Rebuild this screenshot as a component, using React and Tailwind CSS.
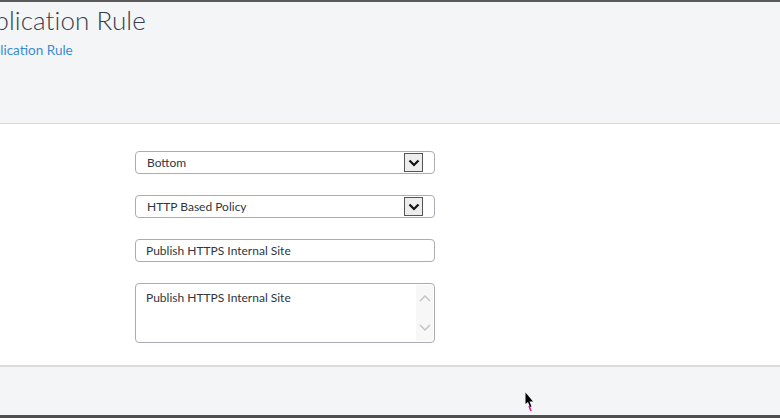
import React from "react";

function Chevron({ className }) {
  return (
    <svg width="12" height="8" viewBox="0 0 12 8" className={className}>
      <path d="M1.5 1.5 L6 6 L10.5 1.5" fill="none" stroke="#111" strokeWidth="2.2" />
    </svg>
  );
}

function Select({ value }) {
  return (
    <div className="relative h-[23px] w-[300px] rounded-[4px] border border-[#a9adb3] bg-white flex items-center pl-[11px] text-[12px] text-[#2f3640]">
      <span>{value}</span>
      <div className="absolute right-[11px] top-[1px] h-[19px] w-[19px] border border-[#555] bg-[#ededed] flex items-center justify-center">
        <Chevron />
      </div>
    </div>
  );
}

export default function App() {
  return (
    <div
      className="w-[780px] h-[418px] overflow-hidden flex flex-col bg-[#f4f5f7] relative"
      style={{ fontFamily: "Lato, 'Open Sans', sans-serif" }}
    >
      <div className="h-[2px] bg-[#5a5a5a]" />
      <div className="h-[122px] border-b border-[#d9dadc] bg-[#f4f5f7] overflow-hidden">
        <div className="ml-[-37px] mt-[2px] text-[26px] leading-[32px] text-[#34404c] font-light tracking-[0.1px] whitespace-nowrap">
          Application Rule
        </div>
        <div className="ml-[-24px] mt-[6px] text-[13.5px] leading-[16px] text-[#3a8ecf] whitespace-nowrap">
          Application Rule
        </div>
      </div>
      <div className="h-[243px] bg-white border-b-2 border-[#dcdcdc] flex flex-col pl-[135px] pt-[27px]">
        <Select value="Bottom" />
        <div className="h-[21px]" />
        <Select value="HTTP Based Policy" />
        <div className="h-[21px]" />
        <div className="h-[23px] w-[300px] rounded-[4px] border border-[#a9adb3] bg-white flex items-center pl-[10px] text-[12px] text-[#2f3640]">
          Publish HTTPS Internal Site
        </div>
        <div className="h-[21px]" />
        <div className="relative h-[60px] w-[300px] rounded-[4px] border border-[#a9adb3] bg-white pl-[10px] pt-[5px] text-[12px] text-[#2f3640]">
          Publish HTTPS Internal Site
          <div className="absolute right-[1px] top-[1px] bottom-[1px] w-[17px] bg-[#f7f7f7] flex flex-col items-center justify-between py-[9px]">
            <svg width="12" height="8" viewBox="0 0 12 8">
              <path d="M1 7 L6 2 L11 7" fill="none" stroke="#c4c4c4" strokeWidth="1.5" />
            </svg>
            <svg width="12" height="8" viewBox="0 0 12 8">
              <path d="M1 1 L6 6 L11 1" fill="none" stroke="#c4c4c4" strokeWidth="1.5" />
            </svg>
          </div>
        </div>
      </div>
      <div className="flex-1 bg-[#f4f5f7]" />
      <div className="h-[3px] bg-[#4f4f4f]" />
      <svg className="absolute left-[525px] top-[392px]" width="10" height="20" viewBox="0 0 10 20">
        <path d="M0.5 0.5 L0.5 12 L3 10 L5 15 L6.5 14.5 L4.5 9.5 L8 9.5 Z" fill="#000" />
        <path d="M4 14 L6 19" stroke="#e0108a" strokeWidth="1.5" />
      </svg>
    </div>
  );
}
